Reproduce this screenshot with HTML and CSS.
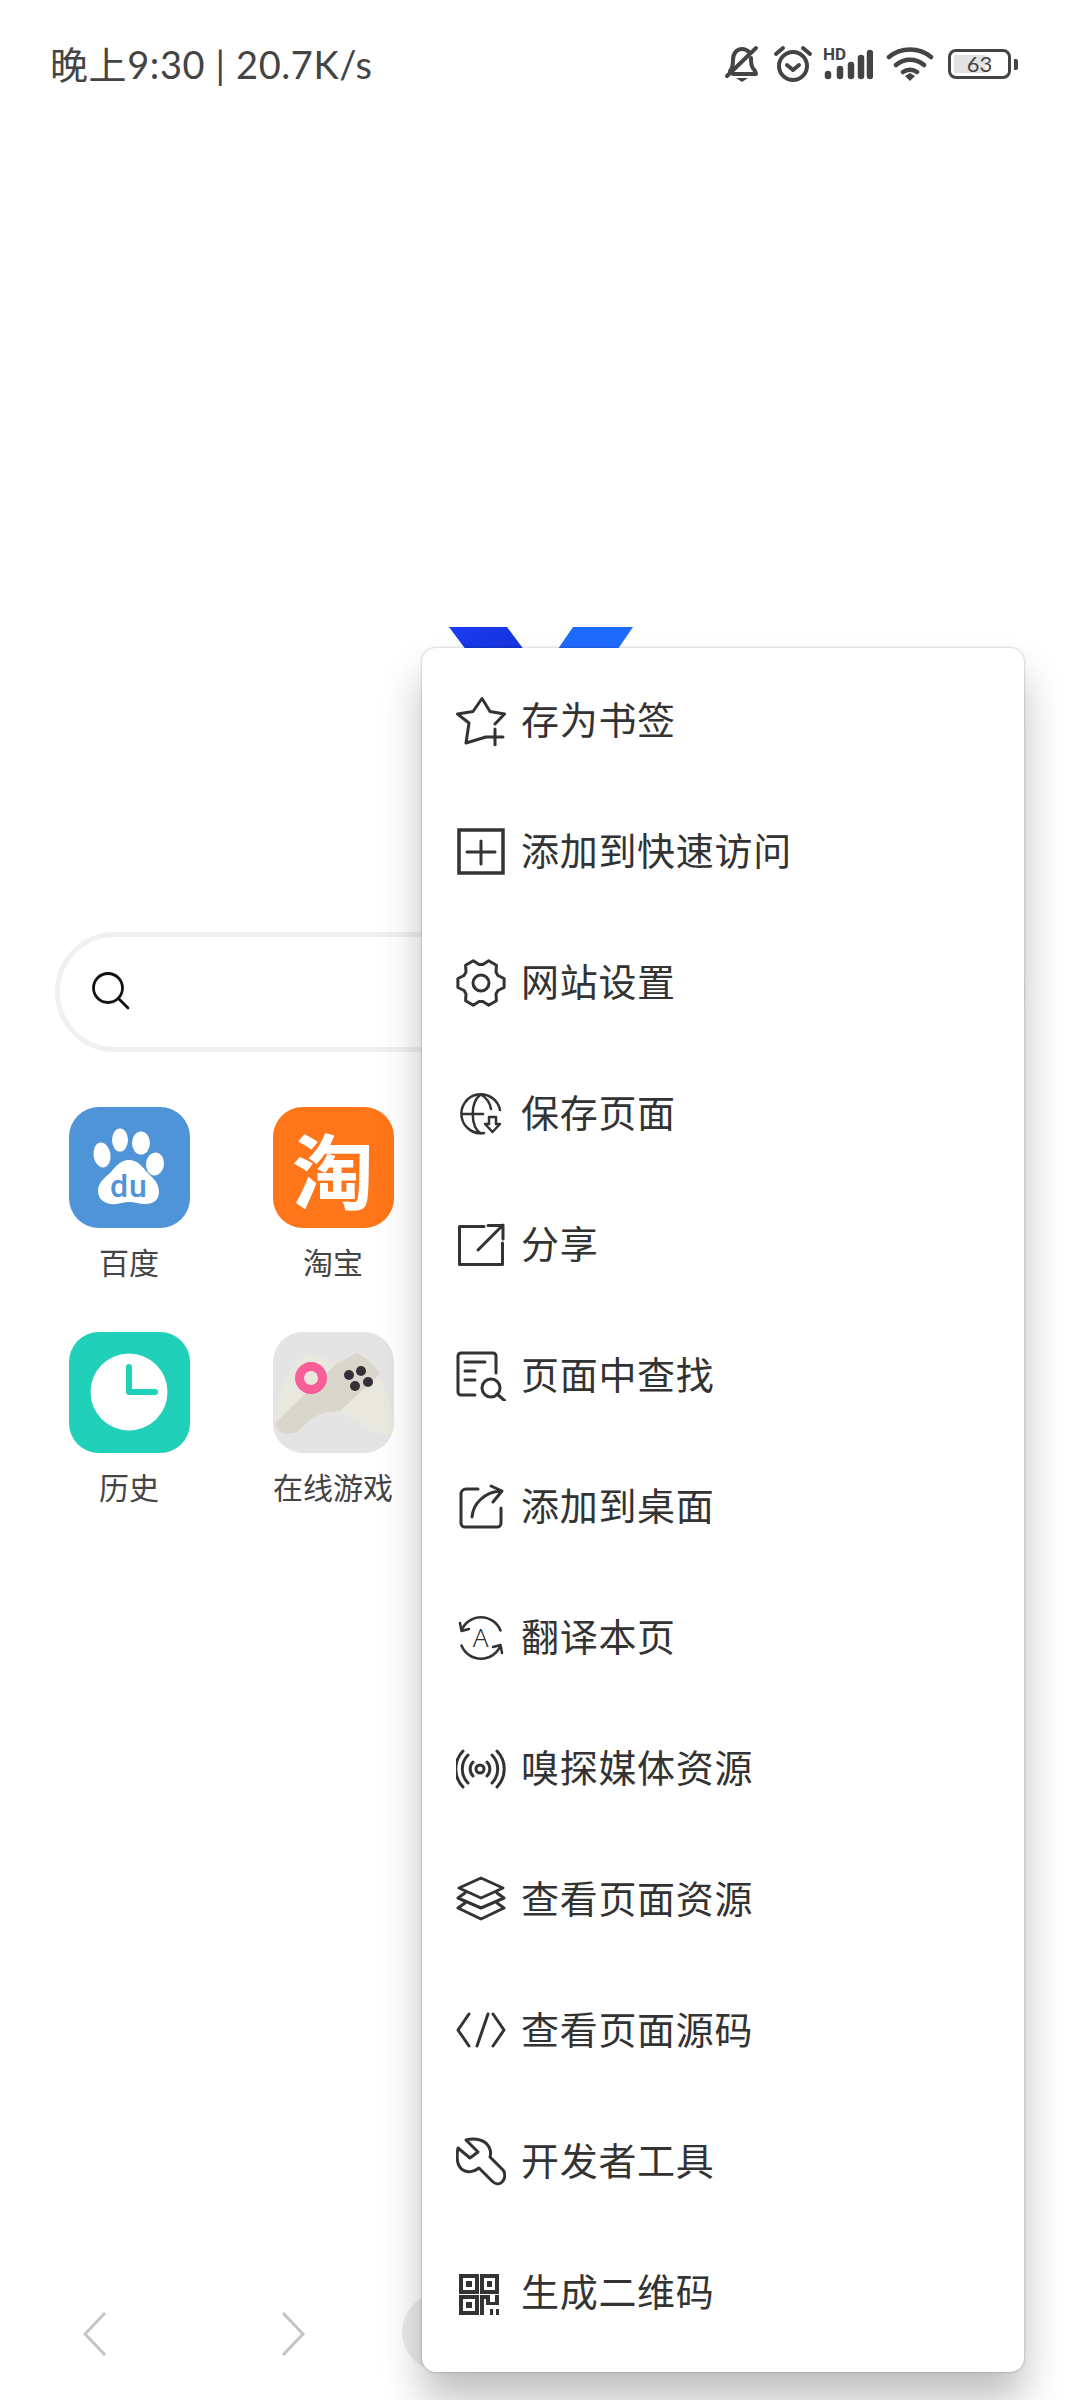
FILE: index.html
```html
<!DOCTYPE html>
<html>
<head>
	<title>X Browser</title>
	<link rel="stylesheet" href="styles.css">
</head>
<body>
	<div class="status">
		<div class="status-text">晚上9:30 | 20.7K/s</div>
		<div class="status-icons">
			<svg class="ic-bell" width="36" height="38" viewBox="0 0 36 38"><path d="M6 26c3-3 3-7 3-11 0-7 4-11 9-11 3 0 5 1 7 3M27 13c0 5 0 9 4 13l1 3H9" fill="none" stroke="#444" stroke-width="4" stroke-linejoin="round" stroke-linecap="round"/><path d="M32 3 3 31" stroke="#444" stroke-width="4" stroke-linecap="round"/><path d="M12 33h12l-6 4z" fill="#444"/></svg>
			<svg class="ic-alarm" width="40" height="38" viewBox="0 0 40 38"><circle cx="20" cy="21" r="14" fill="none" stroke="#444" stroke-width="4"/><path d="M14 20l6 5 6-5M3 9l7-6M37 9l-7-6" fill="none" stroke="#444" stroke-width="4" stroke-linecap="round" stroke-linejoin="round"/></svg>
			<div class="signal">
				<span class="hd">HD</span>
				<svg width="50" height="32" viewBox="0 0 50 32"><path d="M5 28v-2M17 28v-7M28 28V17M38 28V10M47 28V5" stroke="#444" stroke-width="6.500" stroke-linecap="round" fill="none"/></svg>
			</div>
			<svg class="ic-wifi" width="48" height="36" viewBox="0 0 48 36"><path d="M3 11c12-10 30-10 42 0M10 19c8-7 20-7 28 0M17 26c4-3 10-3 14 0" fill="none" stroke="#444" stroke-width="4.5" stroke-linecap="round"/><path d="M19 30l5-3 5 3-5 5z" fill="#444"/></svg>
			<div class="battery">
				<div class="battery-body"><div class="battery-fill"></div><span class="battery-num">63</span></div>
				<div class="battery-nub"></div>
			</div>
		</div>
	</div>

	<div class="hero">
		<svg width="184" height="80" viewBox="0 0 184 80">
			<defs>
				<linearGradient id="logoL" x1="0" y1="0" x2="1" y2="1"><stop offset="0" stop-color="#1b3cf2"/><stop offset="1" stop-color="#0f2cc4"/></linearGradient>
			</defs>
			<path d="M0 0H58L110 70H52z" fill="url(#logoL)"/>
			<path d="M124 0H184L136 70H76z" fill="#1f6bfd"/>
		</svg>
	</div>

	<div class="search">
		<svg width="44" height="44" viewBox="0 0 44 44"><circle cx="19" cy="18" r="14.500" fill="none" stroke="#111" stroke-width="2.800"/><path d="M29.500 28.500l9.500 9.500" stroke="#111" stroke-width="2.800" stroke-linecap="round"/></svg>
	</div>

	<div class="apps">
		<div class="app">
			<div class="app-icon baidu">
				<svg width="121" height="121" viewBox="0 0 121 121">
					<ellipse cx="51" cy="33" rx="8" ry="11.500" fill="#fff"/>
					<ellipse cx="72" cy="36" rx="9" ry="11.500" fill="#fff"/>
					<ellipse cx="33" cy="48" rx="8.500" ry="12.500" fill="#fff" transform="rotate(-8 33 48)"/>
					<ellipse cx="86" cy="57" rx="9" ry="11.500" fill="#fff" transform="rotate(6 86 57)"/>
					<path d="M60 53c8 0 12 5 17 11 5 6 13 10 13 21 0 9-7 12-14 12-6 0-10-2-16-2s-11 3-18 2c-8-1-13-6-13-13 0-9 8-14 13-19 5-6 10-12 18-12z" fill="#fff"/>
					<text class="du" x="60" y="90" text-anchor="middle">du</text>
				</svg>
			</div>
			<div class="app-name">百度</div>
		</div>
		<div class="app">
			<div class="app-icon taobao"><span class="tao">淘</span></div>
			<div class="app-name">淘宝</div>
		</div>
		<div class="app">
			<div class="app-icon history">
				<svg width="121" height="121" viewBox="0 0 121 121"><circle cx="60" cy="60" r="38.500" fill="#fff"/><path d="M60 35v25h26" fill="none" stroke="#20d0b8" stroke-width="6" stroke-linecap="round" stroke-linejoin="round"/></svg>
			</div>
			<div class="app-name">历史</div>
		</div>
		<div class="app">
			<div class="app-icon games">
				<svg width="121" height="121" viewBox="0 0 121 121">
					<path d="M2 91C3 65 14 36 34 21C44 22 54 28 64 31C72 29 78 23 84 21C92 24 100 32 106 41C114 58 120 80 121 103C112 104 108 103 101 100C94 97 88 92 81 88C72 82 65 80 57 80C48 80 42 85 37 88C31 93 27 100 21 101C14 102 9 102 7 100C4 97 3 94 2 91Z" fill="#e9e8de"/>
					<path d="M2 91L64 31C72 29 78 23 84 21C93 25 101 33 107 42L67 79L57 80C48 80 42 85 37 88C31 93 27 100 21 101C14 102 9 102 7 100C4 97 3 94 2 91Z" fill="#d9d7cc"/>
					<circle cx="38" cy="46" r="11.500" fill="none" stroke="#f85f98" stroke-width="9"/>
					<circle cx="76" cy="43" r="5" fill="#333136"/><circle cx="88" cy="39" r="5" fill="#333136"/><circle cx="95" cy="50" r="5" fill="#333136"/><circle cx="82" cy="54" r="5" fill="#333136"/>
				</svg>
			</div>
			<div class="app-name">在线游戏</div>
		</div>
	</div>

	<div class="toolbar">
		<svg class="tool-btn" width="24" height="44" viewBox="0 0 24 44"><path d="M22 1 2 22l20 21" fill="none" stroke="#c4c4c4" stroke-width="3"/></svg>
		<svg class="tool-btn fwd" width="24" height="44" viewBox="0 0 24 44"><path d="M2 1l20 21L2 43" fill="none" stroke="#c4c4c4" stroke-width="3"/></svg>
		<div class="home-btn"></div>
	</div>

	<div class="menu">
		<div class="menu-row">
			<svg class="mi" viewBox="0 0 50 50"><path d="M30 41 10 47l3-20L1.500 18 17 15.500 26 2.500l8 13 14.500 2.500L39 28"/><path d="M31 41h16M39 33v16"/></svg>
			<span>存为书签</span>
		</div>
		<div class="menu-row">
			<svg class="mi" viewBox="0 0 50 50"><path class="sq" d="M3 3h44v43H3z"/><path d="M11 25h28M25 14v23"/></svg>
			<span>添加到快速访问</span>
		</div>
		<div class="menu-row">
			<svg class="mi" viewBox="0 0 50 50"><path d="M41.900 17.500 48.100 20.500V29.500L41.900 32.500 40 35.900 40.400 42.700 32.700 47.200 26.900 43.400H23.100L17.300 47.200 9.600 42.700 10 35.900 8.100 32.500 1.900 29.500V20.500L8.100 17.500 10 14.100 9.600 7.300 17.300 2.800 23.100 6.600H26.900L32.700 2.800 40.400 7.300 40 14.100z"/><circle cx="25" cy="25" r="8"/></svg>
			<span>网站设置</span>
		</div>
		<div class="menu-row">
			<svg class="mi thin" viewBox="0 0 50 50"><path d="M44 21A19.500 19.500 0 1 0 28 44M25 5.500C14 12 14 38 25 44.500M25 5.500C31 9 34 14 35 20M6 25h21"/><path d="M33 28h7v7h4l-7.500 8-7.500-8h4z"/></svg>
			<span>保存页面</span>
		</div>
		<div class="menu-row">
			<svg class="mi" viewBox="0 0 50 50"><path d="M28 6.500H3.500v38h43V23M22 30 47 5M32 5.500h15V19"/></svg>
			<span>分享</span>
		</div>
		<div class="menu-row">
			<svg class="mi" viewBox="0 0 50 50"><path d="M19 44H5a3 3 0 0 1-3-3V5a3 3 0 0 1 3-3h32a3 3 0 0 1 3 3v17M9 11h20M9 20h10M9 29h10M41 43l8 7"/><circle cx="35" cy="37" r="9"/></svg>
			<span>页面中查找</span>
		</div>
		<div class="menu-row">
			<svg class="mi" viewBox="0 0 50 50"><path d="M22 7H10a5 5 0 0 0-5 5v29a4 4 0 0 0 4 4h32a4 4 0 0 0 4-4V26M16 35C17 22 28 10 45 9M35 4l11 5-9 11"/></svg>
			<span>添加到桌面</span>
		</div>
		<div class="menu-row">
			<svg class="mi thin" viewBox="0 0 50 50"><path d="M5.500 17.500A21 21 0 0 1 44.500 17.500M5.500 32.500A21 21 0 0 0 44.500 32.500M4 10l1.500 8 7.500-2M46 40l-1.500-8-7.500 2"/><text class="mi-a" x="25" y="34" text-anchor="middle">A</text></svg>
			<span>翻译本页</span>
		</div>
		<div class="menu-row">
			<svg class="mi" viewBox="0 0 50 50"><circle cx="24" cy="25" r="4"/><path d="M17 18A10 10 0 0 0 17 32M31 18A10 10 0 0 1 31 32M12 11A20 20 0 0 0 12 39M36 11A20 20 0 0 1 36 39M7 7A26 26 0 0 0 7 43M41 7A26 26 0 0 1 41 43"/></svg>
			<span>嗅探媒体资源</span>
		</div>
		<div class="menu-row">
			<svg class="mi" viewBox="0 0 50 50"><path d="M25 3 47 13 25 23 3 13zM9 18 2 23l23 10 23-10-7-5M9 28 2 33l23 11 23-11-7-5"/></svg>
			<span>查看页面资源</span>
		</div>
		<div class="menu-row">
			<svg class="mi" viewBox="0 0 50 50"><path d="M13 8 2 24l11 16M32 8 21 40M37 8l11 16-11 16"/></svg>
			<span>查看页面源码</span>
		</div>
		<div class="menu-row">
			<svg class="mi" viewBox="0 0 50 50"><path d="M10 3C18 1 29 2 33 10C35 14 35 17 34 20L47 33C50 37 49 42 46 45C43 48 39 47 36 44L23 31C18 35 11 36 7 33C2 30 0 22 2 11L14 21L22 15Z"/></svg>
			<span>开发者工具</span>
		</div>
		<div class="menu-row">
			<svg class="mi qr" viewBox="0 0 50 50"><path d="M5 8h16v16H5zM26 8h15v16H26zM5 29h16v16H5z"/><path class="fill" d="M10 13h6v6h-6zM31 13h5v6h-5zM10 34h6v6h-6zM24 27h10v4H24zM24 27h4v20h-4zM30 31h4v6h-4zM30 34h13v3H30zM39 27h4v10h-4zM34 41h3v6h-3zM40 41h3v6h-3z"/></svg>
			<span>生成二维码</span>
		</div>
	</div>
</body>
</html>
```

FILE: styles.css
```css
* {
	box-sizing: border-box;
}
html, body {
	margin: 0;
	padding: 0;
}
body {
	position: relative;
	width: 1080px;
	height: 2400px;
	overflow: hidden;
	background: #fff;
	font-family: "Noto Sans CJK SC", "Noto Sans", sans-serif;
	display: flex;
	flex-direction: column;
}

/* status bar */
.status {
	height: 128px;
	padding: 44px 62px 0 50px;
	display: flex;
	justify-content: space-between;
	align-items: flex-start;
}
.status-text {
	font-family: Lato, "Noto Sans CJK SC", sans-serif;
	font-size: 38px;
	line-height: 40px;
	letter-spacing: .6px;
	color: #444;
}
.status-icons {
	display: flex;
	align-items: center;
	height: 40px;
}
.ic-bell { margin-right: 13px; }
.ic-alarm { margin-right: 10px; }
.signal {
	position: relative;
	width: 50px;
	height: 40px;
	margin-right: 13px;
}
.signal svg {
	position: absolute;
	left: 0;
	bottom: 4px;
}
.hd {
	position: absolute;
	left: 0;
	top: 3px;
	font-family: Roboto, sans-serif;
	font-weight: 700;
	font-size: 17px;
	line-height: 14px;
	color: #444;
}
.ic-wifi { margin-right: 14px; }
.battery {
	display: flex;
	align-items: center;
}
.battery-body {
	position: relative;
	width: 63px;
	height: 30px;
	border: 3px solid #444;
	border-radius: 8px;
	padding: 3px;
}
.battery-fill {
	width: 63%;
	height: 100%;
	background: #e2e2e2;
	border-radius: 2px;
}
.battery-num {
	position: absolute;
	left: 0;
	right: 0;
	top: -2px;
	text-align: center;
	font-family: Lato, sans-serif;
	font-size: 22px;
	line-height: 28px;
	color: #444;
}
.battery-nub {
	width: 4px;
	height: 11px;
	margin-left: 3px;
	background: #444;
	border-radius: 0 2px 2px 0;
}

/* logo above the search box */
.hero {
	height: 804px;
	padding: 499px 0 0 449px;
}
.hero svg {
	display: block;
}

.search {
	height: 120px;
	margin: 0 55px;
	border: 5px solid #f0f0f0;
	border-radius: 60px;
	display: flex;
	align-items: center;
	padding-left: 29px;
}

.apps {
	margin: 55px 0 0 27px;
	display: grid;
	grid-template-columns: repeat(2, 204px);
	grid-auto-rows: 225px;
}
.app {
	display: flex;
	flex-direction: column;
	align-items: center;
}
.app-icon {
	width: 121px;
	height: 121px;
	border-radius: 30px;
	display: flex;
	align-items: center;
	justify-content: center;
}
.app-icon svg {
	display: block;
}
.baidu { background: #4f94d9; }
.taobao { background: #ff7519; }
.history { background: #20d0b8; }
.games {
	background: #e4e4e4;
	overflow: hidden;
}
.du {
	font-family: Roboto, sans-serif;
	font-weight: 500;
	font-size: 32px;
	letter-spacing: 1px;
	fill: #4f94d9;
}
.tao {
	font-size: 82px;
	line-height: 1;
	font-weight: 700;
	color: #fff;
}
.app-name {
	margin-top: 10px;
	font-size: 30px;
	line-height: 46px;
	color: #444;
}

/* bottom toolbar, mostly behind the menu */
.toolbar {
	margin-top: auto;
	height: 106px;
	margin-bottom: 13px;
	display: flex;
	align-items: center;
	padding-left: 83px;
}
.tool-btn {
	display: block;
}
.fwd {
	margin-left: 174px;
}
.home-btn {
	width: 78px;
	height: 78px;
	margin: 0 0 4px 97px;
	border-radius: 50%;
	background: #ececec;
}

/* popup menu */
.menu {
	position: absolute;
	left: 422px;
	top: 648px;
	width: 602px;
	height: 1724px;
	padding: 7px 0 0 34px;
	background: #fff;
	border-radius: 14px;
	box-shadow: 0 0 3px rgba(0, 0, 0, .28), 0 28px 40px rgba(0, 0, 0, .25);
}
.menu-row {
	height: 131px;
	display: flex;
	align-items: center;
	font-size: 38px;
	letter-spacing: .7px;
	color: #333;
}
.menu-row span {
	margin-top: -6px;
}
.mi {
	width: 50px;
	height: 50px;
	margin-right: 15px;
	flex: none;
	fill: none;
	stroke: #333;
	stroke-width: 3;
	stroke-linecap: round;
	stroke-linejoin: round;
}
.mi.thin {
	stroke-width: 2.500;
}
.mi .sq {
	stroke-linejoin: miter;
	stroke-width: 3.500;
}
.mi-a {
	font-family: "Noto Sans", sans-serif;
	font-weight: 300;
	font-size: 26px;
	fill: #333;
	stroke: none;
}
.mi.qr {
	stroke-width: 4;
	stroke-linecap: butt;
	stroke-linejoin: miter;
}
.mi.qr .fill {
	fill: #333;
	stroke: none;
}
```
